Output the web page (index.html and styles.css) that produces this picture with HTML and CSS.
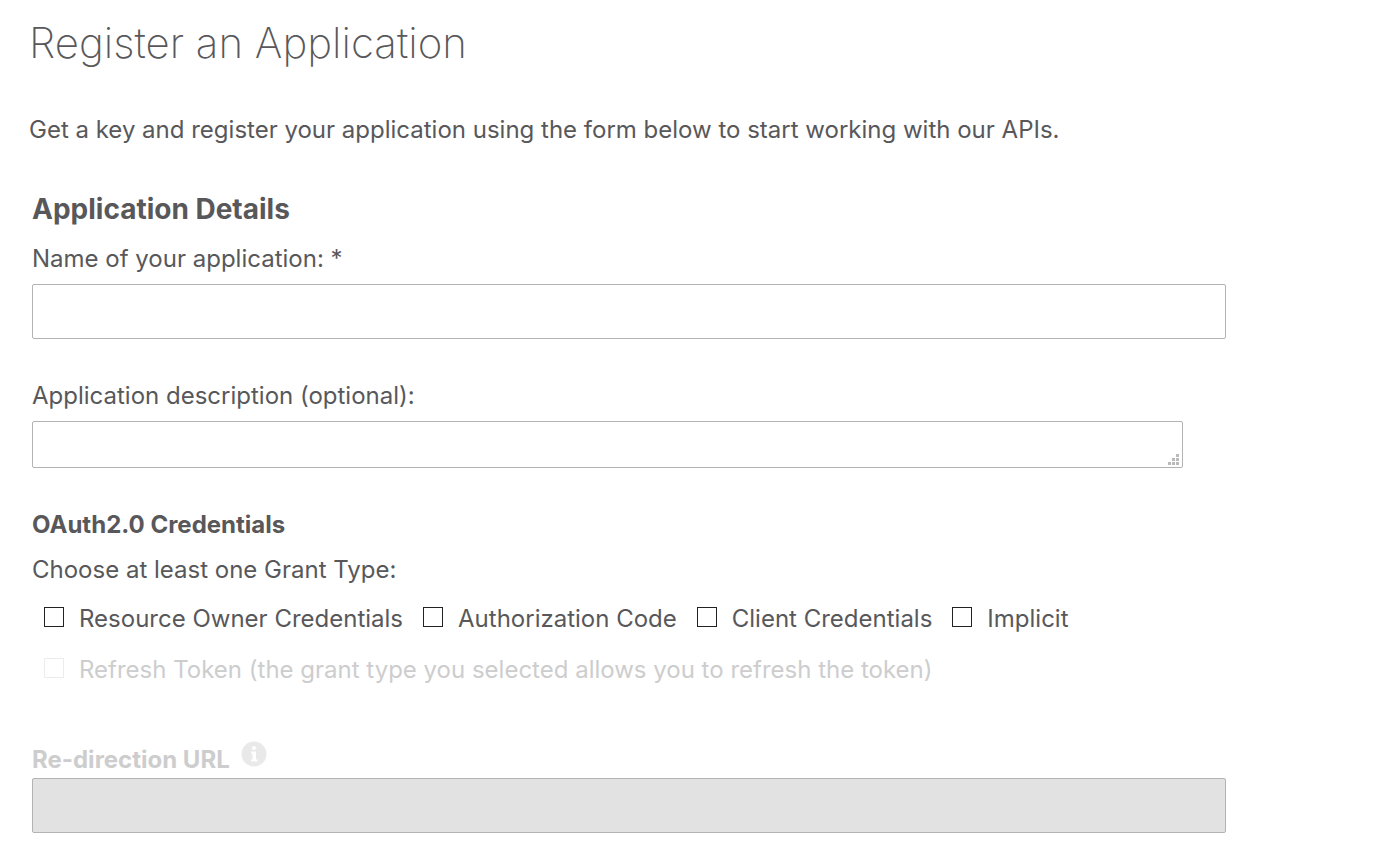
FILE: index.html
```html
<!DOCTYPE html>
<html lang="en">
<head>
<meta charset="utf-8">
<meta name="viewport" content="width=device-width, initial-scale=1">
<title>Register an Application</title>
<link rel="stylesheet" href="styles.css">
</head>
<body>
<main class="page">
  <h1 class="page-title">Register an Application</h1>
  <p class="intro">Get a key and register your application using the form below to start working with our APIs.</p>
  <form class="form">
    <h2 class="section-title">Application Details</h2>
    <div class="field">
      <label for="app-name">Name of your application: *</label>
      <input class="text-box" type="text" id="app-name" required>
    </div>
    <div class="field">
      <label for="app-desc">Application description (optional):</label>
      <div class="area-wrap">
        <textarea class="text-area" id="app-desc" rows="1"></textarea>
        <svg class="grip" width="11" height="11" viewBox="0 0 11 11" aria-hidden="true"><path d="M8 0h3v3H8zM4 4h3v3H4zM8 4h3v3H8zM0 8h3v3H0zM4 8h3v3H4zM8 8h3v3H8z"/></svg>
      </div>
    </div>
    <h3 class="sub-title">OAuth2.0 Credentials</h3>
    <fieldset class="grants">
      <legend class="legend">Choose at least one Grant Type:</legend>
      <div class="options">
        <label class="option"><input class="check" type="checkbox">Resource Owner Credentials</label>
        <label class="option"><input class="check" type="checkbox">Authorization Code</label>
        <label class="option"><input class="check" type="checkbox">Client Credentials</label>
        <label class="option"><input class="check" type="checkbox">Implicit</label>
        <label class="option option-disabled"><input class="check" type="checkbox" disabled>Refresh Token (the grant type you selected allows you to refresh the token)</label>
      </div>
    </fieldset>
    <div class="redirect">
      <div class="redirect-head">
        <label class="redirect-label" for="redirect-url">Re-direction URL</label>
        <svg class="info" width="26" height="26" viewBox="0 0 26 26" role="img" aria-label="Information"><circle cx="13" cy="13" r="12.5" fill="#e9e9e9"/><g fill="#fff"><circle cx="13" cy="7" r="2.1"/><path d="M10 10.5h5v8h1.500V20.500H10V18.500h1.500v-6H10z"/></g></svg>
      </div>
      <input class="text-box" type="text" id="redirect-url" disabled>
    </div>
  </form>
</main>
</body>
</html>
```
FILE: styles.css
```css
* { box-sizing: border-box; }
body {
  margin: 0;
  background: #fff;
  color: #58585b;
  font: 400 24px/32px Inter, "Liberation Sans", sans-serif;
}
.page { padding: 15px 174px 20px 29px; }
.page-title {
  margin: 0 0 43px;
  font-size: 42px;
  font-weight: 200;
  line-height: 56px;
}
.intro { margin: 0 0 45px; }
.form { margin-left: 3px; }
.section-title {
  margin: 0 0 16px;
  font-size: 28px;
  font-weight: 700;
  line-height: 36px;
}
.field {
  display: flex;
  flex-direction: column;
  gap: 9px;
  margin-bottom: 41px;
}
.text-box, .text-area {
  display: block;
  width: 100%;
  margin: 0;
  padding: 8px 12px;
  border: 1px solid #b3b3b3;
  border-radius: 2px;
  background: #fff;
  color: inherit;
  font: inherit;
}
.text-box { height: 55px; }
.text-box:disabled { background: #e2e2e2; }
.area-wrap { position: relative; margin-right: 43px; }
.text-area { height: 47px; padding: 6px 12px; resize: none; overflow: hidden; }
.grip { position: absolute; right: 4px; bottom: 3px; fill: #bababa; pointer-events: none; }
.sub-title {
  margin: 0 0 13px;
  font-size: 24px;
  font-weight: 700;
}
.grants { margin: 0 0 55px; padding: 0; border: 0; min-width: 0; }
.legend { padding: 0; margin-bottom: 17px; }
.options { display: flex; flex-wrap: wrap; gap: 19px 20px; padding-left: 12px; }
.option { display: flex; align-items: center; gap: 15px; }
.check {
  appearance: none;
  flex: none;
  width: 20px;
  height: 20px;
  margin: 0 0 4px;
  border: 1px solid #222;
  background: #fff;
}
.check:checked { background: #58585b; box-shadow: inset 0 0 0 3px #fff; }
.option-disabled { color: #cdcdce; }
.option-disabled .check { border-color: #ececec; }
.redirect-head {
  display: flex;
  align-items: flex-start;
  gap: 11px;
  margin-bottom: 2px;
  color: #cdcdce;
  font-weight: 700;
}
.redirect-label { padding-top: 3px; }
```
